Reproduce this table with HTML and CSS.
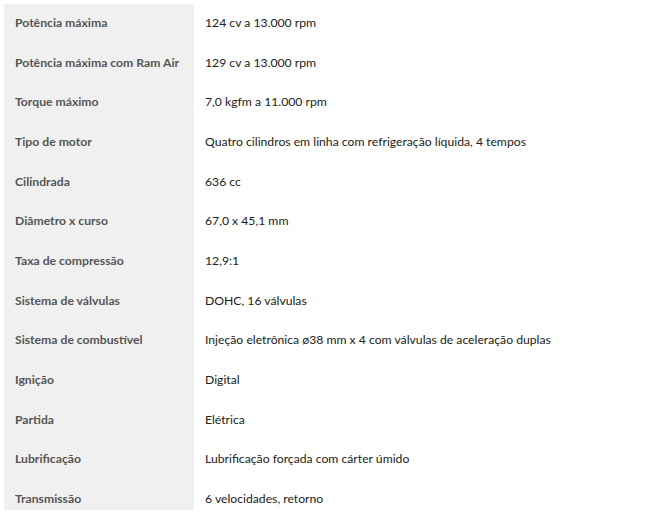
FILE: index.html
```html
<!DOCTYPE html>
<html lang="pt-BR">
<head>
<meta charset="utf-8">
<link rel="stylesheet" href="styles.css">
</head>
<body>
<div class="frame">
<table class="specs">
<colgroup><col class="col-label"><col class="col-value"></colgroup>
<tbody>
<tr><th>Potência máxima</th><td>124 cv a 13.000 rpm</td></tr>
<tr><th>Potência máxima com Ram Air</th><td>129 cv a 13.000 rpm</td></tr>
<tr><th>Torque máximo</th><td>7,0 kgfm a 11.000 rpm</td></tr>
<tr><th>Tipo de motor</th><td>Quatro cilindros em linha com refrigeração líquida, 4 tempos</td></tr>
<tr><th>Cilindrada</th><td>636 cc</td></tr>
<tr><th>Diâmetro x curso</th><td>67,0 x 45,1 mm</td></tr>
<tr><th>Taxa de compressão</th><td>12,9:1</td></tr>
<tr><th>Sistema de válvulas</th><td>DOHC, 16 válvulas</td></tr>
<tr><th>Sistema de combustível</th><td>Injeção eletrônica ø38 mm x 4 com válvulas de aceleração duplas</td></tr>
<tr><th>Ignição</th><td>Digital</td></tr>
<tr><th>Partida</th><td>Elétrica</td></tr>
<tr><th>Lubrificação</th><td>Lubrificação forçada com cárter úmido</td></tr>
<tr><th>Transmissão</th><td>6 velocidades, retorno</td></tr>
</tbody>
</table>
</div>
</body>
</html>
```
FILE: styles.css
```css
html, body {
  margin: 0;
  padding: 0;
  background: #ffffff;
}
body {
  padding: 4px 4px 0 4px;
  font-family: Lato, "Open Sans", sans-serif;
  font-size: 12.2px;
}
.frame {
  height: 506px;
  overflow: hidden;
}
.specs {
  border-collapse: collapse;
  width: 100%;
  table-layout: fixed;
}
.col-label {
  width: 190px;
}
.specs th,
.specs td {
  padding: 9px 11px 11px;
  line-height: 19.65px;
  text-align: left;
  vertical-align: middle;
  white-space: nowrap;
}
.specs th {
  background: #f0f0f0;
  color: #555555;
  font-weight: 700;
}
.specs td {
  color: #222222;
  font-weight: 400;
}
```
